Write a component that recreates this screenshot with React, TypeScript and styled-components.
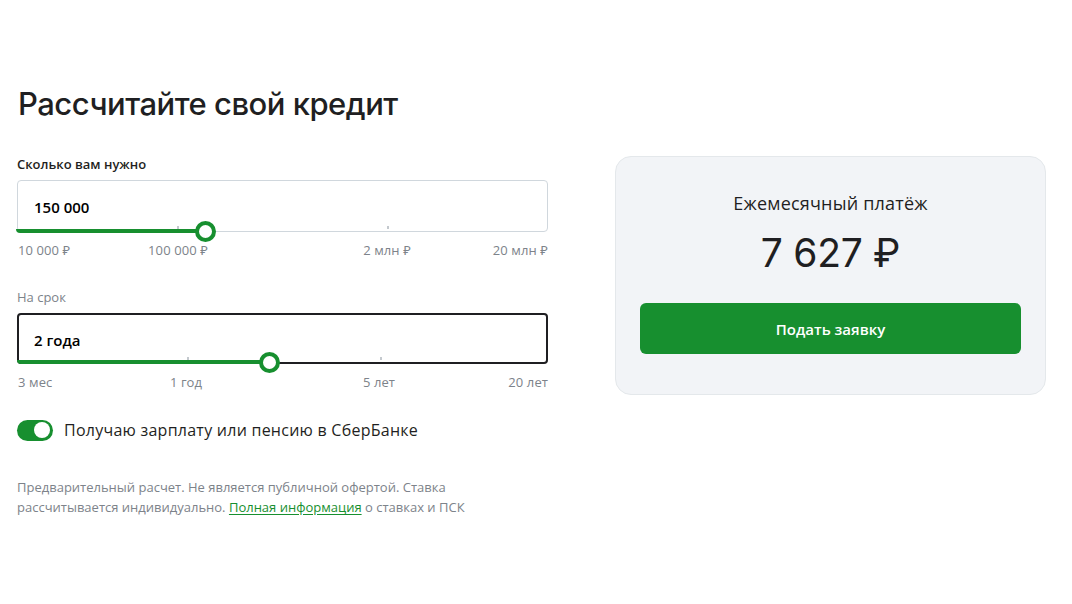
import React from "react";
import styled, { createGlobalStyle } from "styled-components";

const Global = createGlobalStyle`
  html, body { margin: 0; padding: 0; background: #fff; }
  body { font-family: "Open Sans", "Noto Sans", Arial, sans-serif; color: #1f1f22; }
  * { box-sizing: border-box; }
`;

const GREEN = "#178f2f";

const Page = styled.div`
  width: 1072px;
  height: 604px;
  padding: 84px 26px 0 17px;
`;

const Title = styled.h1`
  margin: 0 0 32px 1px;
  font-family: Inter, "Open Sans", sans-serif;
  font-weight: 500;
  font-size: 31px;
  line-height: 40px;
  letter-spacing: -0.5px;
  color: #1f1f22;
`;

const Row = styled.div`
  display: flex;
  align-items: flex-start;
  gap: 67px;
`;

const LeftCol = styled.div`
  width: 531px;
  display: flex;
  flex-direction: column;
`;

const FieldLabel = styled.div<{ $muted?: boolean }>`
  font-size: 13px;
  line-height: 16px;
  font-weight: ${(p) => (p.$muted ? 400 : 550)};
  color: ${(p) => (p.$muted ? "#7d838a" : "#1f1f22")};
  margin-bottom: 8px;
`;

const InputBox = styled.div<{ $active?: boolean }>`
  position: relative;
  height: ${(p) => (p.$active ? 51 : 52)}px;
  border: ${(p) => (p.$active ? "2px solid #1f1f22" : "1px solid #d0d7dd")};
  border-radius: 4px;
  display: flex;
  align-items: center;
  padding: 2px 0 0 ${(p) => (p.$active ? 15 : 16)}px;
  font-size: 15px;
  font-weight: 600;
  color: #000;
`;

const Track = styled.div`
  position: absolute;
  left: -2px;
  right: -2px;
  bottom: -2px;
  height: 4px;
`;

const Fill = styled.div`
  position: absolute;
  left: 0;
  top: 0;
  height: 4px;
  background: ${GREEN};
  border-radius: 0 0 0 4px;
`;

const Tick = styled.div`
  position: absolute;
  top: -3px;
  width: 2px;
  height: 3px;
  background: #c4c9ce;
`;

const Thumb = styled.div`
  position: absolute;
  top: 50%;
  width: 21px;
  height: 21px;
  margin: -10.5px 0 0 -10.5px;
  border-radius: 50%;
  border: 4.5px solid ${GREEN};
  background: #fff;
`;

const Scale = styled.div`
  position: relative;
  height: 16px;
  margin-top: 10px;
  font-size: 13px;
  line-height: 16px;
  letter-spacing: 0.1px;
  color: #7d838a;
`;

const ScaleMark = styled.span<{ $align: "left" | "center" | "right" }>`
  position: absolute;
  top: 0;
  white-space: nowrap;
  transform: ${(p) =>
    p.$align === "center" ? "translateX(-50%)" : p.$align === "right" ? "translateX(-100%)" : "none"};
`;

const Spacer = styled.div<{ $h: number }>`
  height: ${(p) => p.$h}px;
`;

const ToggleRow = styled.label`
  display: flex;
  align-items: center;
  gap: 11px;
  font-size: 16px;
  line-height: 22px;
  letter-spacing: 0.25px;
  color: #1f1f22;
`;

const Toggle = styled.span`
  position: relative;
  width: 36px;
  height: 21px;
  border-radius: 11px;
  background: ${GREEN};
  flex: none;
  &::after {
    content: "";
    position: absolute;
    right: 3px;
    top: 2.5px;
    width: 16px;
    height: 16px;
    border-radius: 50%;
    background: #fff;
  }
`;

const Disclaimer = styled.p`
  margin: 0;
  font-size: 13px;
  line-height: 20px;
  color: #7d838a;
  width: 470px;
`;

const Link = styled.a`
  color: ${GREEN};
  text-decoration: underline;
  text-underline-offset: 2px;
`;

const Card = styled.div`
  width: 431px;
  height: 239px;
  background: #f2f4f7;
  border: 1px solid #e4e8eb;
  border-radius: 16px;
  padding: 33px 24px 0 24px;
  display: flex;
  flex-direction: column;
  align-items: center;
`;

const CardTitle = styled.div`
  font-size: 18px;
  line-height: 26px;
  letter-spacing: 0.2px;
  color: #1f1f22;
`;

const Amount = styled.div`
  margin-top: 13px;
  font-family: Inter, "Open Sans", sans-serif;
  font-size: 39px;
  line-height: 48px;
  font-weight: 400;
  letter-spacing: -0.3px;
  color: #1f1f22;
`;

const Button = styled.button`
  margin-top: 26px;
  width: 100%;
  height: 51px;
  border: none;
  border-radius: 6px;
  background: ${GREEN};
  color: #fff;
  font-family: "Open Sans", sans-serif;
  font-size: 15px;
  font-weight: 600;
`;

type Mark = { label: string; pos: number; align: "left" | "center" | "right" };

function Slider(props: {
  label: string;
  muted?: boolean;
  value: string;
  active?: boolean;
  fill: number;
  ticks: number[];
  marks: Mark[];
}) {
  return (
    <>
      <FieldLabel $muted={props.muted}>{props.label}</FieldLabel>
      <InputBox $active={props.active}>
        {props.value}
        <Track>
          {props.ticks.map((t) => (
            <Tick key={t} style={{ left: t }} />
          ))}
          <Fill style={{ width: props.fill }} />
          <Thumb style={{ left: props.fill }} />
        </Track>
      </InputBox>
      <Scale>
        {props.marks.map((m) => (
          <ScaleMark key={m.label} $align={m.align} style={{ left: m.pos }}>
            {m.label}
          </ScaleMark>
        ))}
      </Scale>
    </>
  );
}

export default function App() {
  return (
    <Page>
      <Global />
      <Title>Рассчитайте свой кредит</Title>
      <Row>
        <LeftCol>
          <Slider
            label="Сколько вам нужно"
            value="150 000"
            fill={189}
            ticks={[161, 371]}
            marks={[
              { label: "10 000 ₽", pos: 1, align: "left" },
              { label: "100 000 ₽", pos: 161, align: "center" },
              { label: "2 млн ₽", pos: 370, align: "center" },
              { label: "20 млн ₽", pos: 531, align: "right" },
            ]}
          />
          <Spacer $h={31} />
          <Slider
            label="На срок"
            muted
            active
            value="2 года"
            fill={252}
            ticks={[170, 363]}
            marks={[
              { label: "3 мес", pos: 1, align: "left" },
              { label: "1 год", pos: 169, align: "center" },
              { label: "5 лет", pos: 362, align: "center" },
              { label: "20 лет", pos: 531, align: "right" },
            ]}
          />
          <Spacer $h={29} />
          <ToggleRow>
            <Toggle />
            Получаю зарплату или пенсию в СберБанке
          </ToggleRow>
          <Spacer $h={36} />
          <Disclaimer>
            Предварительный расчет. Не является публичной офертой. Ставка рассчитывается
            индивидуально. <Link>Полная информация</Link> о ставках и ПСК
          </Disclaimer>
        </LeftCol>
        <Card>
          <CardTitle>Ежемесячный платёж</CardTitle>
          <Amount>7 627 ₽</Amount>
          <Button>Подать заявку</Button>
        </Card>
      </Row>
    </Page>
  );
}
